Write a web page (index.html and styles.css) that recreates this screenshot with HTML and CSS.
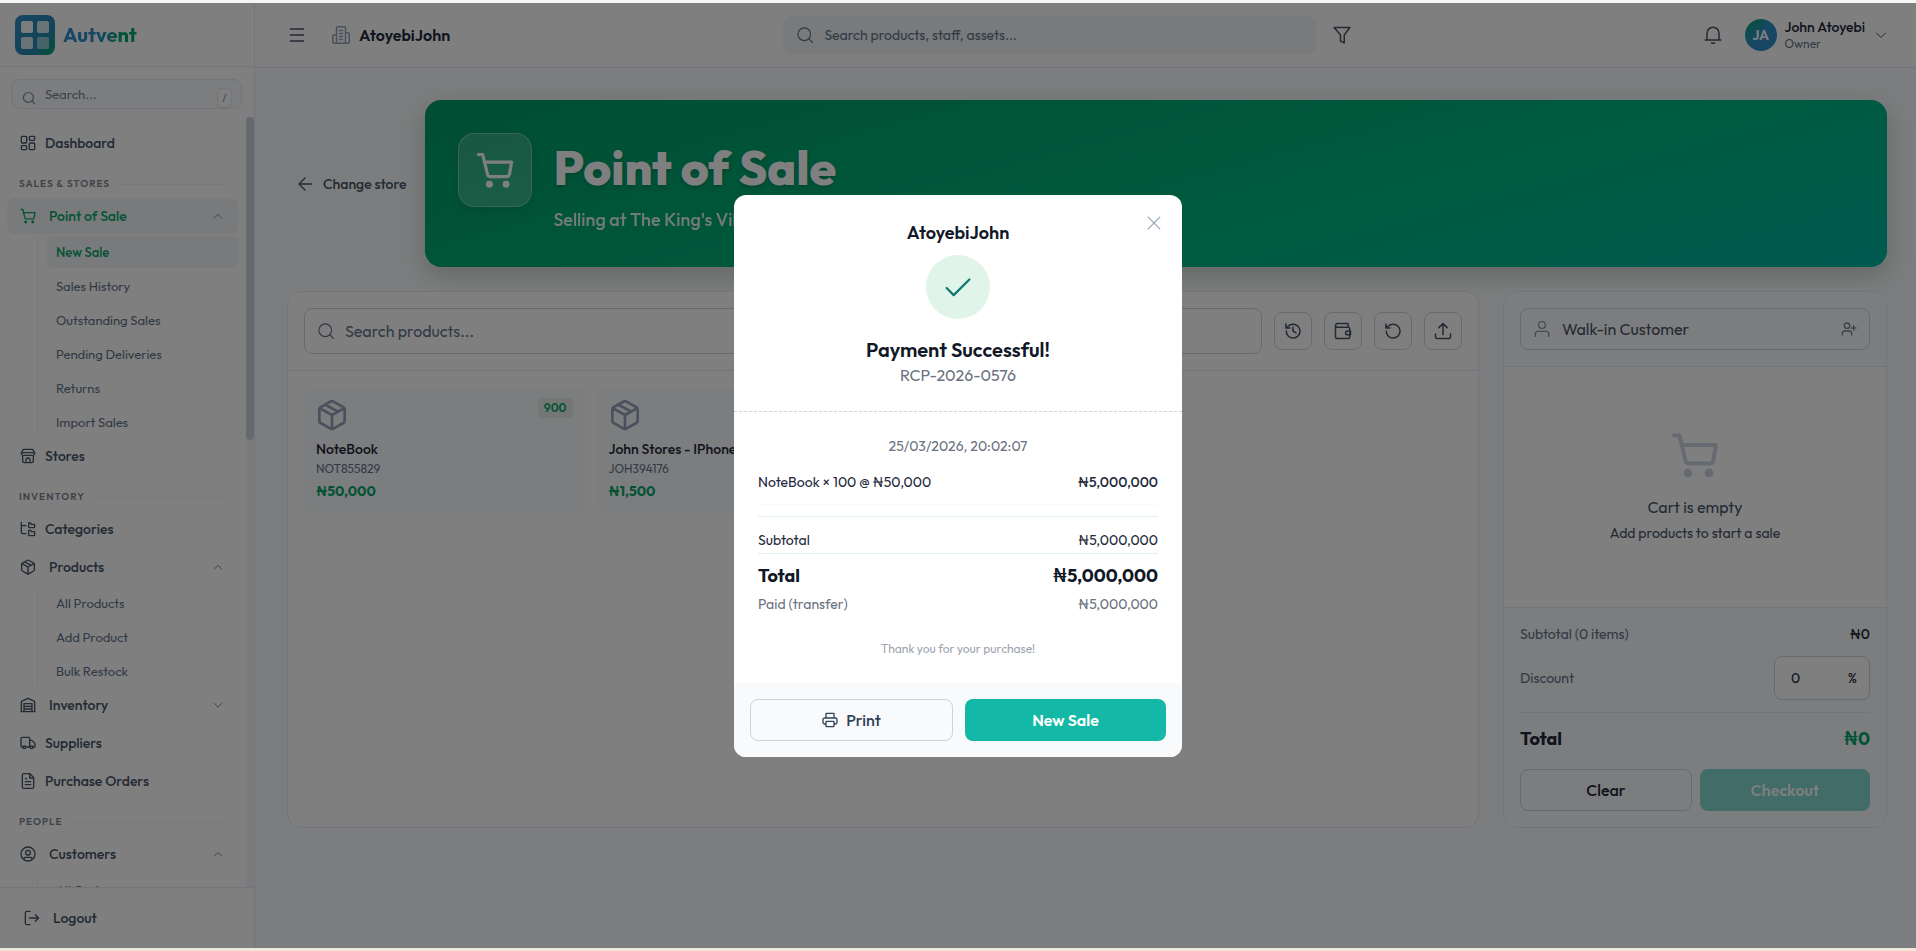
FILE: index.html
```html
<!DOCTYPE html>
<html lang="en">
	<head>
		<meta charset="UTF-8" />
		<meta name="viewport" content="width=device-width, initial-scale=1.0" />
		<title>Autvent - Point of Sale</title>
		<link rel="stylesheet" href="styles.css">
	</head>
	<body>
		<!-- icon sprite -->
		<svg class="sprite" aria-hidden="true">
			<symbol id="search" viewBox="0 0 24 24"><circle cx="11" cy="11" r="8.5" /><path d="M17.2 17.2 22 22" /></symbol>
			<symbol id="dashboard" viewBox="0 0 24 24"><rect x="2" y="2" width="8" height="10" rx="1.5" /><rect x="14" y="2" width="8" height="6" rx="1.5" /><rect x="14" y="12" width="8" height="10" rx="1.5" /><rect x="2" y="16" width="8" height="6" rx="1.5" /></symbol>
			<symbol id="cart" viewBox="0 0 24 24"><path d="M1.5 2.2h2.7l3.1 12.7a1.8 1.8 0 0 0 1.7 1.3h10.4a1.8 1.8 0 0 0 1.7-1.4L22.5 7H5.4" /><circle class="dot" cx="8.5" cy="21" r="1.2" /><circle class="dot" cx="19" cy="21" r="1.2" /></symbol>
			<symbol id="store" viewBox="0 0 24 24"><path d="M5 2h14l3 5v2a3 3 0 0 1-3 2H5a3 3 0 0 1-3-2V7zM2 7h20M4 11v9a2 2 0 0 0 2 2h12a2 2 0 0 0 2-2v-9M9 22v-4a3 3 0 0 1 6 0v4" /></symbol>
			<symbol id="tree" viewBox="0 0 24 24"><path d="M2 2v14a3 3 0 0 0 3 3h4M2 7h7M13 3h3l1 2h4a1 1 0 0 1 1 1v3a1 1 0 0 1-1 1h-7a1 1 0 0 1-1-1zM13 14h3l1 2h4a1 1 0 0 1 1 1v4a1 1 0 0 1-1 1h-7a1 1 0 0 1-1-1z" /></symbol>
			<symbol id="box" viewBox="0 0 24 24"><path d="M11 1.9a2 2 0 0 1 2 0l7.5 4.2a2 2 0 0 1 1 1.8v8.3a2 2 0 0 1-1 1.8L13 22.2a2 2 0 0 1-2 0L3.5 18a2 2 0 0 1-1-1.8V7.9a2 2 0 0 1 1-1.8zM3 7l9 5 9-5M12 12v10.3M7.2 4.3l9 5" /></symbol>
			<symbol id="warehouse" viewBox="0 0 24 24"><path d="M2 22V7.5a1.5 1.5 0 0 1 1-1.4l8-3.7a2 2 0 0 1 2 0l8 3.7a1.5 1.5 0 0 1 1 1.4V22zM6 22V10h12v12M6 14h12M6 18h12" /></symbol>
			<symbol id="truck" viewBox="0 0 24 24"><path d="M4 18H3a1.5 1.5 0 0 1-1.5-1.5V5A1.5 1.5 0 0 1 3 3.5h10A1.5 1.5 0 0 1 14.500 5v13H9M14.500 8H18l4.500 5v4a1 1 0 0 1-1 1H20" /><circle cx="6.5" cy="18.5" r="2" /><circle cx="17.5" cy="18.5" r="2" /></symbol>
			<symbol id="file" viewBox="0 0 24 24"><path d="M15 1H5.5a2 2 0 0 0-2 2v18a2 2 0 0 0 2 2h13a2 2 0 0 0 2-2V7zM14.5 1v6.5H20M8 8.5h2M8 13h8M8 17.5h8" /></symbol>
			<symbol id="user-circle" viewBox="0 0 24 24"><circle cx="12" cy="12" r="10.5" /><circle cx="12" cy="10" r="3.5" /><path d="M6 20v-1a2 2 0 0 1 2-2h8a2 2 0 0 1 2 2v1" /></symbol>
			<symbol id="logout" viewBox="0 0 24 24"><path d="M9 22H4a2 2 0 0 1-2-2V4a2 2 0 0 1 2-2h5M8 12h14M17 7l5 5-5 5" /></symbol>
			<symbol id="up" viewBox="0 0 24 24"><path d="m3 17 9-9 9 9" /></symbol>
			<symbol id="down" viewBox="0 0 24 24"><path d="m3 8 9 9 9-9" /></symbol>
			<symbol id="menu" viewBox="0 0 24 24"><path d="M2 3h20M2 12h20M2 21h20" /></symbol>
			<symbol id="building" viewBox="0 0 24 24"><path d="M6 23V3a2 2 0 0 1 2-2h8a2 2 0 0 1 2 2v20zM6 12H3a2 2 0 0 0-2 2v7a2 2 0 0 0 2 2h3M18 9h3a2 2 0 0 1 2 2v10a2 2 0 0 1-2 2h-3M10 6h4M10 10h4M10 14h4M10 18h4" /></symbol>
			<symbol id="filter" viewBox="0 0 24 24"><path d="M1.5 2h21L15 12v10.500L10 20v-8z" /></symbol>
			<symbol id="bell" viewBox="0 0 24 24"><path d="M1.5 18.500h21M4 18.500v-9a8 8 0 0 1 16 0v9M10 22.500a3 2 0 0 0 4 0" /></symbol>
			<symbol id="back" viewBox="0 0 24 24"><path d="M22 12H3M12 3l-9 9 9 9" /></symbol>
			<symbol id="history" viewBox="0 0 24 24"><path d="M3 12a9.2 9.2 0 1 0 9-9 9.8 9.8 0 0 0-6.7 2.7L2.5 8M2.5 2.5V8H8M12 7v5l4 2.5" /></symbol>
			<symbol id="wallet" viewBox="0 0 24 24"><path d="M19 7V3a1 1 0 0 0-1-1H4.500a2.500 2.500 0 0 0 0 5H19a2 2 0 0 1 2 2v11a2 2 0 0 1-2 2H4a2 2 0 0 1-2-2V4.500M22 12h-4a2.500 2.500 0 0 0 0 5h4z" /></symbol>
			<symbol id="undo" viewBox="0 0 24 24"><path d="M3 12a9.2 9.2 0 1 0 9-9 9.8 9.8 0 0 0-6.7 2.7L2.5 8M2.5 2.5V8H8" /></symbol>
			<symbol id="upload" viewBox="0 0 24 24"><path d="M12 17V2M6.5 7.5 12 2l5.5 5.5M2 16v4a2 2 0 0 0 2 2h16a2 2 0 0 0 2-2v-4" /></symbol>
			<symbol id="user" viewBox="0 0 24 24"><circle cx="12" cy="6.5" r="4.5" /><path d="M3 22v-3a4 4 0 0 1 4-4h10a4 4 0 0 1 4 4v3" /></symbol>
			<symbol id="user-plus" viewBox="0 0 24 24"><circle cx="9" cy="7" r="4" /><path d="M2 21v-2a4 4 0 0 1 4-4h6a4 4 0 0 1 4 4v2M19 7v7M15.5 10.5h7" /></symbol>
			<symbol id="close" viewBox="0 0 24 24"><path d="M2 2l20 20M22 2 2 22" /></symbol>
			<symbol id="check" viewBox="0 0 24 24"><path d="M1.5 13 8 19.500 22.500 5" /></symbol>
			<symbol id="printer" viewBox="0 0 24 24"><path d="M6 18H4a2.5 2.5 0 0 1-2.5-2.5v-4A2.5 2.5 0 0 1 4 9h16a2.5 2.5 0 0 1 2.500 2.500v4A2.500 2.500 0 0 1 20 18h-2M6 9V3a1 1 0 0 1 1-1h10a1 1 0 0 1 1 1v6M7 14h10a1 1 0 0 1 1 1v6a1 1 0 0 1-1 1H7a1 1 0 0 1-1-1v-6a1 1 0 0 1 1-1z" /></symbol>
		</svg>

		<div class="app">
			<aside class="sidebar">
				<div class="brand">
					<svg class="logo" viewBox="0 0 40 40">
						<defs>
							<linearGradient id="logoFill" x1="0" y1="0" x2="1" y2="1">
								<stop offset="0" stop-color="#2f8fc8" />
								<stop offset=".65" stop-color="#2588b0" />
								<stop offset="1" stop-color="#05a66b" />
							</linearGradient>
						</defs>
						<rect width="40" height="40" rx="8" fill="url(#logoFill)" />
						<rect x="6" y="6" width="12" height="12" rx="2" fill="#fff" fill-opacity=".95" />
						<rect x="22" y="6" width="12" height="12" rx="2" fill="#fff" fill-opacity=".8" />
						<rect x="6" y="22" width="12" height="12" rx="2" fill="#fff" fill-opacity=".8" />
						<rect x="22" y="22" width="12" height="12" rx="2" fill="#fff" fill-opacity=".5" />
					</svg>
					<span class="brand-name">Autvent</span>
				</div>
				<div class="side-search">
					<svg class="icon"><use href="#search" /></svg>
					<input type="text" placeholder="Search..." aria-label="Search menu" />
					<kbd>/</kbd>
				</div>
				<div class="nav-wrap">
					<nav>
						<a class="item" href="#"><svg class="icon i16"><use href="#dashboard" /></svg>Dashboard</a>
						<div class="section">Sales &amp; Stores</div>
						<button type="button" class="item group active"><svg class="icon i16"><use href="#cart" /></svg>Point of Sale<svg class="icon chev"><use href="#up" /></svg></button>
						<div class="sub">
							<a class="active" href="#">New Sale</a>
							<a href="#">Sales History</a>
							<a href="#">Outstanding Sales</a>
							<a href="#">Pending Deliveries</a>
							<a href="#">Returns</a>
							<a href="#">Import Sales</a>
						</div>
						<a class="item" href="#"><svg class="icon i16"><use href="#store" /></svg>Stores</a>
						<div class="section">Inventory</div>
						<a class="item" href="#"><svg class="icon i16"><use href="#tree" /></svg>Categories</a>
						<button type="button" class="item group"><svg class="icon i16"><use href="#box" /></svg>Products<svg class="icon chev"><use href="#up" /></svg></button>
						<div class="sub">
							<a href="#">All Products</a>
							<a href="#">Add Product</a>
							<a href="#">Bulk Restock</a>
						</div>
						<button type="button" class="item group"><svg class="icon i16"><use href="#warehouse" /></svg>Inventory<svg class="icon chev"><use href="#down" /></svg></button>
						<a class="item" href="#"><svg class="icon i16"><use href="#truck" /></svg>Suppliers</a>
						<a class="item" href="#"><svg class="icon i16"><use href="#file" /></svg>Purchase Orders</a>
						<div class="section">People</div>
						<button type="button" class="item group"><svg class="icon i16"><use href="#user-circle" /></svg>Customers<svg class="icon chev"><use href="#up" /></svg></button>
						<div class="sub">
							<a href="#">All Customers</a>
						</div>
					</nav>
					<div class="scrollbar"><div class="thumb"></div></div>
				</div>
				<div class="side-footer">
					<button type="button" class="logout"><svg class="icon i16"><use href="#logout" /></svg>Logout</button>
				</div>
			</aside>

			<div class="main">
				<header class="topbar">
					<div class="top-left">
						<button type="button" class="plain" aria-label="Menu"><svg class="icon i16"><use href="#menu" /></svg></button>
						<div class="company"><svg class="icon i18"><use href="#building" /></svg>AtoyebiJohn</div>
					</div>
					<div class="top-mid">
						<div class="top-search">
							<svg class="icon i18"><use href="#search" /></svg>
							<input type="text" placeholder="Search products, staff, assets..." aria-label="Search" />
						</div>
						<button type="button" class="plain" aria-label="Filter"><svg class="icon i18"><use href="#filter" /></svg></button>
					</div>
					<div class="top-right">
						<button type="button" class="plain" aria-label="Notifications"><svg class="icon i18"><use href="#bell" /></svg></button>
						<button type="button" class="profile">
							<span class="avatar">JA</span>
							<span class="who"><span class="who-name">John Atoyebi</span><span class="who-role">Owner</span></span>
							<svg class="icon i12"><use href="#down" /></svg>
						</button>
					</div>
				</header>

				<main class="content">
					<div class="page-head">
						<button type="button" class="back"><svg class="icon i16"><use href="#back" /></svg>Change store</button>
						<div class="banner">
							<div class="banner-icon"><svg class="icon"><use href="#cart" /></svg></div>
							<div>
								<h1>Point of Sale</h1>
								<p>Selling at The King's Village</p>
							</div>
						</div>
					</div>

					<div class="columns">
						<section class="panel">
							<div class="toolbar">
								<div class="product-search">
									<svg class="icon i18"><use href="#search" /></svg>
									<input type="text" placeholder="Search products..." aria-label="Search products" />
								</div>
								<button type="button" class="tool" aria-label="History"><svg class="icon i18"><use href="#history" /></svg></button>
								<button type="button" class="tool" aria-label="Wallet"><svg class="icon i18"><use href="#wallet" /></svg></button>
								<button type="button" class="tool" aria-label="Returns"><svg class="icon i18"><use href="#undo" /></svg></button>
								<button type="button" class="tool" aria-label="Export"><svg class="icon i18"><use href="#upload" /></svg></button>
							</div>
							<div class="products">
								<button type="button" class="product">
									<span class="stock">900</span>
									<svg class="icon"><use href="#box" /></svg>
									<span class="p-name">NoteBook</span>
									<span class="p-code">NOT855829</span>
									<span class="p-price">₦50,000</span>
								</button>
								<button type="button" class="product">
									<svg class="icon"><use href="#box" /></svg>
									<span class="p-name">John Stores - IPhone</span>
									<span class="p-code">JOH394176</span>
									<span class="p-price">₦1,500</span>
								</button>
							</div>
						</section>

						<section class="panel cart">
							<div class="cart-head">
								<button type="button" class="customer"><svg class="icon i18"><use href="#user" /></svg><span>Walk-in Customer</span><svg class="icon i16"><use href="#user-plus" /></svg></button>
							</div>
							<div class="cart-empty">
								<svg class="icon"><use href="#cart" /></svg>
								<p class="empty-title">Cart is empty</p>
								<p>Add products to start a sale</p>
							</div>
							<div class="cart-foot">
								<div class="row sub-row"><span>Subtotal (0 items)</span><b>₦0</b></div>
								<div class="row discount">
									<label for="discount">Discount</label>
									<div class="discount-box"><input type="text" id="discount" value="0" /><span>%</span></div>
								</div>
								<div class="row cart-total"><span>Total</span><span class="green">₦0</span></div>
								<div class="actions">
									<button type="button" class="btn">Clear</button>
									<button type="button" class="btn primary" disabled>Checkout</button>
								</div>
							</div>
						</section>
					</div>
				</main>
			</div>

			<div class="overlay">
				<div class="modal" role="dialog" aria-labelledby="paid">
					<button type="button" class="close" aria-label="Close"><svg class="icon"><use href="#close" /></svg></button>
					<div class="modal-head">
						<div class="shop">AtoyebiJohn</div>
						<div class="tick"><svg class="icon"><use href="#check" /></svg></div>
						<h2 id="paid">Payment Successful!</h2>
						<p>RCP-2026-0576</p>
					</div>
					<div class="receipt">
						<p class="date">25/03/2026, 20:02:07</p>
						<div class="row line"><span>NoteBook × 100 @ ₦50,000</span><b>₦5,000,000</b></div>
						<div class="row subtotal"><span>Subtotal</span><span>₦5,000,000</span></div>
						<div class="row total"><span>Total</span><span>₦5,000,000</span></div>
						<div class="row paid"><span>Paid (transfer)</span><span>₦5,000,000</span></div>
						<p class="thanks">Thank you for your purchase!</p>
					</div>
					<div class="modal-foot">
						<button type="button" class="btn"><svg class="icon i16"><use href="#printer" /></svg>Print</button>
						<button type="button" class="btn primary">New Sale</button>
					</div>
				</div>
			</div>
		</div>
	</body>
</html>
```
FILE: styles.css
```css
* {
	box-sizing: border-box;
}

body {
	margin: 0;
	font-family: "Outfit", "Lato", "Liberation Sans", sans-serif;
	font-size: 14px;
	line-height: 20px;
	color: #1e293b;
	background: #f8fafc;
}

h1,
h2,
p {
	margin: 0;
}

button,
input {
	font: inherit;
	color: inherit;
}

button {
	padding: 0;
	border: none;
	background: none;
	cursor: pointer;
}

input {
	min-width: 0;
	width: 100%;
	padding: 0;
	border: none;
	outline: none;
	background: none;
}

a {
	color: inherit;
	text-decoration: none;
}

.sprite {
	display: none;
}

.icon {
	flex: none;
	width: 14px;
	height: 14px;
	fill: none;
	stroke: currentColor;
	stroke-width: 2;
	stroke-linecap: round;
	stroke-linejoin: round;
}

.dot {
	fill: currentColor;
}

.i12 {
	width: 12px;
	height: 12px;
}

.i16 {
	width: 16px;
	height: 16px;
}

.i18 {
	width: 18px;
	height: 18px;
	stroke-width: 1.5;
}

.app {
	position: relative;
	display: flex;
	height: 100vh;
	border-top: 3px solid #f4f5f6;
	border-bottom: 3px solid #efe7d8;
}

/* sidebar */
.sidebar {
	display: flex;
	flex-direction: column;
	flex: none;
	width: 255px;
	background: #fff;
	border-right: 1px solid #e2e8f0;
}

.brand {
	display: flex;
	align-items: center;
	gap: 8px;
	padding: 12px 15px 11px;
	border-bottom: 1px solid #e2e8f0;
}

.logo {
	width: 40px;
	height: 40px;
}

.brand-name {
	font-size: 20px;
	font-weight: 700;
	background: linear-gradient(90deg, #2f8fc8 50%, #05a66b 80%);
	-webkit-background-clip: text;
	background-clip: text;
	color: transparent;
}

.side-search {
	display: flex;
	align-items: center;
	gap: 9px;
	height: 30px;
	margin: 12px 12px 8px 11px;
	padding: 0 9px 0 10px;
	font-size: 13px;
	color: #7c8794;
	background: #f8fafc;
	border: 1px solid #e2e8f0;
	border-radius: 8px;
}

.side-search .icon {
	margin-top: 8px;
}

.side-search input::placeholder {
	color: #7c8794;
}

kbd {
	flex: none;
	width: 15px;
	margin-top: 8px;
	font: inherit;
	font-size: 11px;
	line-height: 18px;
	text-align: center;
	background: #fff;
	border: 1px solid #e2e8f0;
	border-radius: 4px;
}

.nav-wrap {
	display: flex;
	flex: 1;
	min-height: 0;
}

nav {
	flex: 1;
	padding: 8px 8px 0 7px;
	overflow: hidden;
}

.scrollbar {
	width: 8px;
	background: #f1f5f9;
}

.thumb {
	height: 42%;
	background: #cbd5e1;
	border-radius: 4px;
}

.item {
	display: flex;
	align-items: center;
	gap: 9px;
	width: 100%;
	height: 36px;
	padding: 0 15px 0 13px;
	font-weight: 500;
	color: #475569;
	border-radius: 8px;
}

.item + .item,
.item + .sub {
	margin-top: 2px;
}

.group {
	gap: 13px;
}

.item.active {
	color: #05a66b;
	background: #f1f5f9;
}

.chev {
	width: 10px;
	height: 10px;
	margin-left: auto;
	color: #64748b;
}

.section {
	display: flex;
	align-items: center;
	gap: 9px;
	margin: 16px 12px 7px;
	font-size: 10px;
	font-weight: 600;
	line-height: 14px;
	letter-spacing: 1px;
	text-transform: uppercase;
	color: #7c8794;
}

.section::after {
	content: "";
	flex: 1;
	height: 1px;
	background: #eef2f6;
}

.sub {
	display: flex;
	flex-direction: column;
	gap: 2px;
	margin-left: 30px;
	padding-left: 8px;
	font-size: 13px;
	color: #64748b;
	border-left: 1px solid #eef2f6;
}

.sub a {
	padding: 6px 10px;
	border-radius: 6px;
}

.sub a.active {
	font-weight: 500;
	color: #05a66b;
	background: #f1f5f9;
}

.side-footer {
	padding: 12px 8px;
	border-top: 1px solid #e2e8f0;
}

.logout {
	display: flex;
	align-items: center;
	gap: 13px;
	height: 36px;
	padding: 0 16px;
	font-weight: 500;
	color: #475569;
}

/* top bar */
.main {
	display: flex;
	flex-direction: column;
	flex: 1;
	min-width: 0;
}

.topbar {
	display: grid;
	grid-template-columns: 12fr 568px 13fr;
	align-items: center;
	height: 65px;
	padding: 0 29px 0 34px;
	color: #475569;
	background: #fff;
	border-bottom: 1px solid #e2e8f0;
}

.plain {
	display: flex;
}

.plain .icon,
.company .icon {
	stroke-width: 2;
}

.top-left,
.top-right,
.company,
.profile {
	display: flex;
	align-items: center;
}

.top-left {
	gap: 27px;
}

.company {
	gap: 9px;
	font-size: 16px;
	font-weight: 600;
	color: #1e293b;
}

.company .icon {
	color: #94a3b8;
}

.top-mid {
	display: flex;
	align-items: center;
	gap: 17px;
}

.top-search {
	display: flex;
	align-items: center;
	flex: 1;
	gap: 10px;
	height: 38px;
	padding: 0 13px;
	color: #64748b;
	background: #f1f5f9;
	border-radius: 8px;
}

input::placeholder {
	color: #64748b;
	opacity: 1;
}

.top-right {
	justify-content: flex-end;
	gap: 23px;
}

.profile {
	gap: 8px;
}

.avatar {
	width: 32px;
	font-weight: 600;
	line-height: 32px;
	color: #fff;
	background: linear-gradient(135deg, #05a66b, #2f8fc8 50%);
	border-radius: 50%;
}

.who {
	display: flex;
	flex-direction: column;
	margin-right: 2px;
	text-align: left;
}

.who-name {
	font-weight: 500;
	line-height: 18px;
	color: #1e293b;
}

.who-role {
	font-size: 12px;
	line-height: 16px;
	color: #64748b;
}

/* page */
.content {
	flex: 1;
	padding: 32px 29px 32px 32px;
	background: #f8fafc;
}

.page-head {
	display: flex;
	gap: 19px;
	margin-bottom: 24px;
}

.back {
	display: flex;
	align-items: center;
	gap: 10px;
	padding-left: 10px;
	font-weight: 500;
	color: #475569;
	white-space: nowrap;
}

.banner {
	display: flex;
	flex: 1;
	gap: 21px;
	height: 167px;
	padding: 33px;
	color: #fff;
	background: linear-gradient(165deg, #009c66, #00b67c 60%, #00b4a2);
	border-radius: 16px;
	box-shadow: 0 8px 24px rgba(60, 80, 60, 0.25);
}

.banner-icon {
	display: flex;
	align-items: center;
	justify-content: center;
	width: 74px;
	height: 74px;
	background: rgba(255, 255, 255, 0.2);
	border: 1px solid rgba(255, 255, 255, 0.3);
	border-radius: 16px;
	box-shadow: 0 4px 12px rgba(0, 0, 0, 0.1);
}

.banner-icon .icon {
	width: 38px;
	height: 38px;
}

.banner h1 {
	padding-top: 6px;
	font-size: 48px;
	font-weight: 800;
	line-height: 56px;
	text-shadow: 0 2px 4px rgba(0, 0, 0, 0.2);
}

.banner p {
	padding-top: 14px;
	font-size: 18px;
	font-weight: 500;
	line-height: 22px;
	opacity: 0.9;
}

.columns {
	display: grid;
	grid-template-columns: 1fr 384px;
	gap: 24px;
}

.panel {
	display: flex;
	flex-direction: column;
	min-height: 537px;
	background: #fff;
	border: 1px solid #e2e8f0;
	border-radius: 14px;
	overflow: hidden;
}

.toolbar {
	display: flex;
	align-items: center;
	gap: 12px;
	padding: 16px;
	border-bottom: 1px solid #e2e8f0;
}

.product-search {
	display: flex;
	align-items: center;
	flex: 1;
	gap: 10px;
	height: 46px;
	padding: 0 12px;
	font-size: 16px;
	color: #64748b;
	border: 1px solid #cbd5e1;
	border-radius: 8px;
}

.tool {
	display: flex;
	align-items: center;
	justify-content: center;
	width: 38px;
	height: 38px;
	color: #475569;
	border: 1px solid #cbd5e1;
	border-radius: 8px;
}

.tool .icon {
	stroke-width: 2;
}

.products {
	display: grid;
	grid-template-columns: repeat(4, 1fr);
	gap: 12px;
	padding: 16px;
}

.product {
	position: relative;
	display: flex;
	flex-direction: column;
	align-items: flex-start;
	padding: 12px;
	background: #f8fafc;
	border-radius: 10px;
}

.product .icon {
	width: 32px;
	height: 32px;
	margin-bottom: 8px;
	color: #94a3b8;
}

.stock {
	position: absolute;
	top: 11px;
	right: 12px;
	padding: 0 6px;
	font-size: 12px;
	font-weight: 600;
	color: #05a66b;
	background: #e8eeec;
	border-radius: 4px;
}

.p-name {
	font-weight: 500;
	color: #1e293b;
}

.p-code {
	font-size: 12px;
	color: #64748b;
}

.p-price {
	padding-top: 2px;
	font-weight: 700;
	color: #05a66b;
}

.cart-head {
	padding: 16px;
	background: #f8fafc;
	border-bottom: 1px solid #e2e8f0;
}

.customer {
	display: flex;
	align-items: center;
	gap: 11px;
	width: 100%;
	height: 42px;
	padding: 0 12px;
	font-size: 16px;
	color: #475569;
	border: 1px solid #cbd5e1;
	border-radius: 8px;
}

.customer span {
	flex: 1;
	text-align: left;
}

.customer .icon {
	color: #7c8794;
}

.cart-empty {
	display: flex;
	flex: 1;
	flex-direction: column;
	align-items: center;
	justify-content: center;
	color: #475569;
}

.cart-empty .icon {
	width: 48px;
	height: 48px;
	margin-bottom: 18px;
	color: #cbd5e1;
}

.empty-title {
	margin-bottom: 6px;
	font-size: 16px;
}

.cart-foot {
	padding: 16px;
	background: #f8fafc;
	border-top: 1px solid #e2e8f0;
}

.row {
	display: flex;
	align-items: center;
	justify-content: space-between;
}

.row b {
	font-weight: 500;
}

.cart-foot .sub-row {
	margin-bottom: 12px;
	color: #64748b;
}

.sub-row b {
	color: #1e293b;
}

.discount {
	padding-bottom: 12px;
	color: #64748b;
	border-bottom: 1px solid #e2e8f0;
}

.discount-box {
	display: flex;
	align-items: center;
	width: 96px;
	height: 44px;
	padding: 0 12px 0 16px;
	color: #1e293b;
	background: #fff;
	border: 1px solid #cbd5e1;
	border-radius: 8px;
}

.cart-total {
	padding: 14px 0 18px;
	font-size: 18px;
	font-weight: 700;
	line-height: 24px;
}

.green {
	color: #05a66b;
}

.actions,
.modal-foot {
	display: flex;
}

.actions {
	gap: 8px;
}

.btn {
	display: flex;
	flex: 1;
	align-items: center;
	justify-content: center;
	gap: 8px;
	height: 42px;
	font-size: 16px;
	font-weight: 500;
	border: 1px solid #cbd5e1;
	border-radius: 8px;
}

.btn.primary {
	font-weight: 600;
	color: #fff;
	background: #14b8a6;
	border: none;
}

.btn:disabled {
	opacity: 0.5;
}

/* receipt modal */
.overlay {
	position: absolute;
	inset: 0;
	display: flex;
	align-items: center;
	justify-content: center;
	background: rgba(0, 0, 0, 0.5);
}

.modal {
	position: relative;
	width: 448px;
	color: #1e293b;
	background: #fff;
	border-radius: 12px;
	overflow: hidden;
}

.close {
	position: absolute;
	top: 21px;
	right: 21px;
	display: flex;
	color: #94a3b8;
}

.modal-head {
	display: flex;
	flex-direction: column;
	align-items: center;
	padding: 26px 24px 24px;
	border-bottom: 1px dashed #cbd5e1;
}

.shop {
	font-size: 18px;
	font-weight: 600;
	line-height: 24px;
	color: #111827;
}

.tick {
	display: flex;
	align-items: center;
	justify-content: center;
	width: 64px;
	height: 64px;
	margin: 10px 0 18px;
	color: #0f766e;
	background: #e0f4e9;
	border-radius: 50%;
}

.tick .icon {
	width: 26px;
	height: 26px;
}

.modal h2 {
	font-size: 20px;
	font-weight: 600;
	line-height: 26px;
	color: #111827;
}

.modal-head p {
	font-size: 16px;
	line-height: 24px;
	color: #6b7280;
}

.receipt {
	padding: 24px;
}

.date {
	margin-bottom: 16px;
	text-align: center;
	color: #6b7280;
}

.line {
	padding-bottom: 12px;
	border-bottom: 1px solid #f8fafc;
}

.subtotal {
	margin-top: 11px;
	padding: 13px 0 3px;
	border-top: 1px solid #e2f0ea;
	border-bottom: 1px solid #e2f0ea;
}

.total {
	padding: 10px 0 6px;
	font-size: 18px;
	font-weight: 700;
	line-height: 24px;
	color: #111827;
}

.paid {
	color: #6b7280;
}

.thanks {
	margin-top: 25px;
	font-size: 12px;
	text-align: center;
	color: #9ca3af;
}

.modal-foot {
	gap: 12px;
	padding: 16px;
	background: #f8fafc;
}

.modal-foot .btn {
	color: #334155;
}

.modal-foot .btn.primary {
	color: #fff;
}
```
